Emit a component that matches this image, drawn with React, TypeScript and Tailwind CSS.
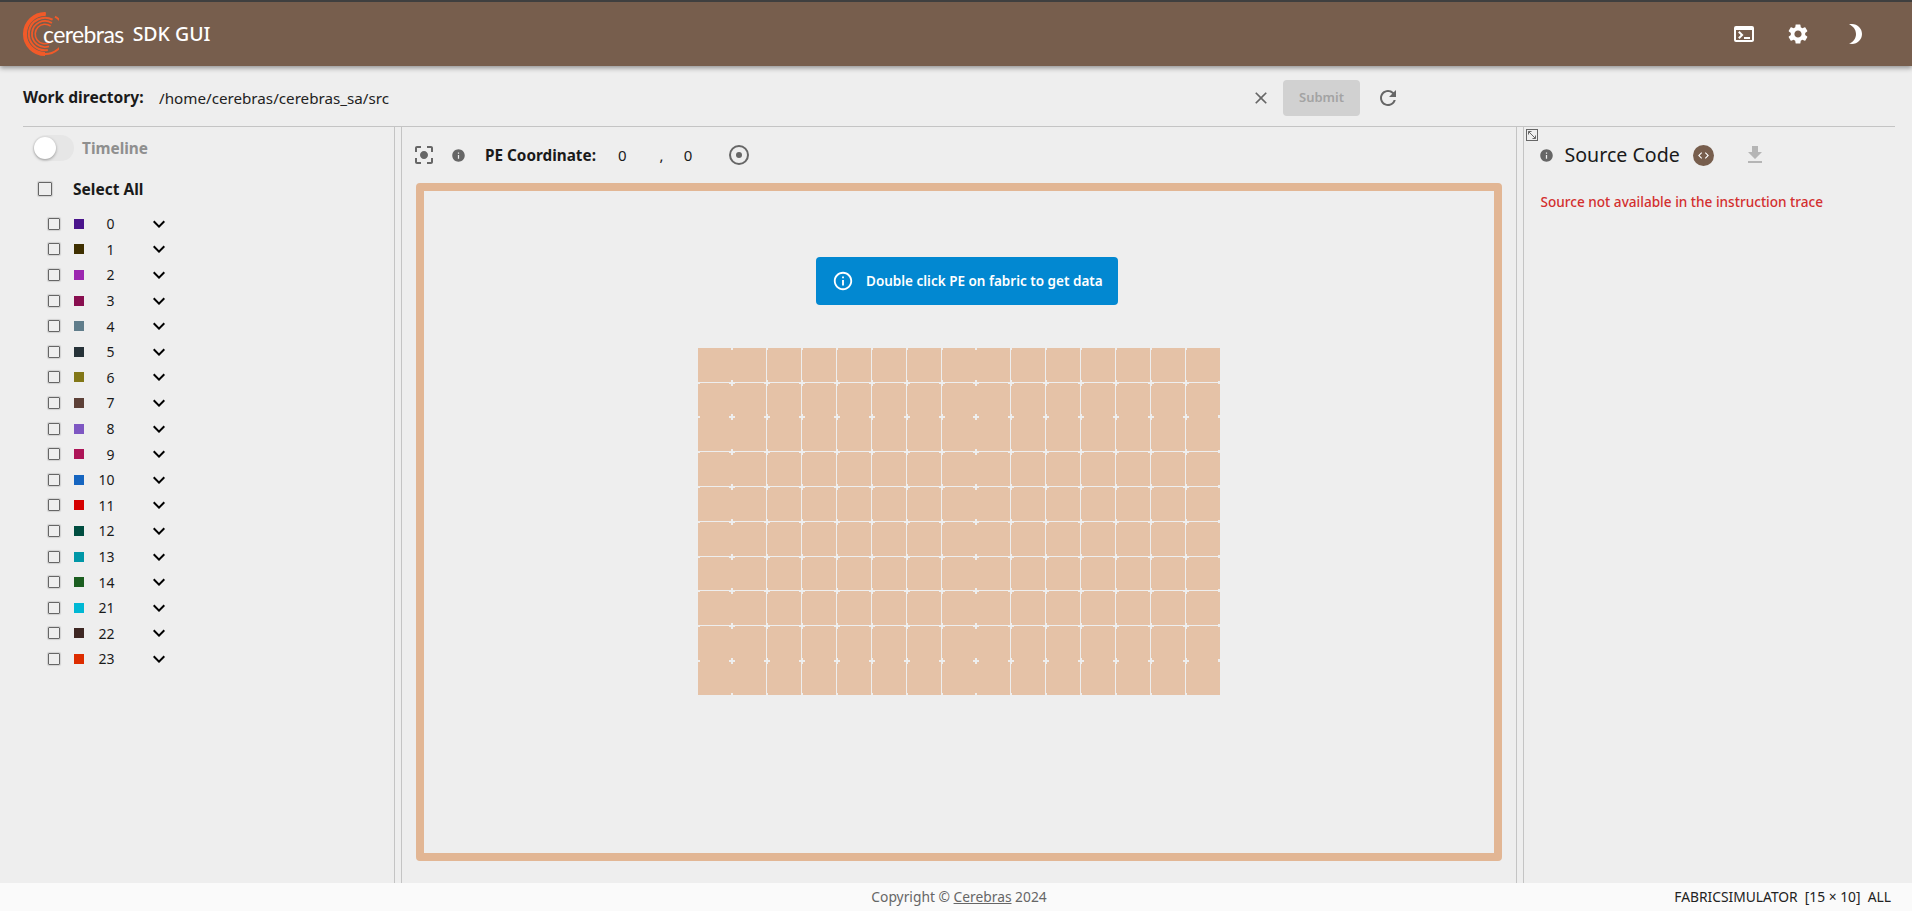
import React from "react";
import {
  MdTerminal,
  MdSettings,
  MdBrightness3,
  MdClose,
  MdRefresh,
  MdInfo,
  MdCenterFocusStrong,
  MdExpandMore,
  MdFileDownload,
  MdCode,
  MdInfoOutline,
} from "react-icons/md";

const rows: [string, string][] = [
  ["0", "#4a148c"],
  ["1", "#3e2f00"],
  ["2", "#9c27b0"],
  ["3", "#880e4f"],
  ["4", "#607d8b"],
  ["5", "#263238"],
  ["6", "#827717"],
  ["7", "#5d4037"],
  ["8", "#7e57c2"],
  ["9", "#ad1457"],
  ["10", "#1565c0"],
  ["11", "#d50000"],
  ["12", "#004d40"],
  ["13", "#0097a7"],
  ["14", "#1b5e20"],
  ["21", "#00b8d4"],
  ["22", "#3e2723"],
  ["23", "#dd2c00"],
];

function Logo() {
  const arc = (r: number, a0: number, a1: number) => {
    const cx = 22;
    const cy = 22;
    const p = (a: number) => [cx + r * Math.cos((a * Math.PI) / 180), cy + r * Math.sin((a * Math.PI) / 180)];
    const [x0, y0] = p(a0);
    const [x1, y1] = p(a1);
    return `M${x0} ${y0} A${r} ${r} 0 1 0 ${x1} ${y1}`;
  };
  return (
    <svg width="36" height="44" viewBox="0 0 36 44" fill="none" stroke="#f15a29" className="shrink-0">
      <path d={arc(20, -88, 90)} strokeWidth="4" />
      <path d={arc(20, -88, -60)} strokeWidth="2" />
      <path d={arc(16.2, -62, 80)} strokeWidth="2" />
      <path d={arc(13, -58, 72)} strokeWidth="1.8" />
      <path d={arc(9.8, -55, 62)} strokeWidth="1.6" />
    </svg>
  );
}

function Fabric() {
  const xs = [33, 68, 103, 138, 173, 208, 243, 277, 312, 347, 382, 417, 452, 487];
  const noV = new Set([33, 277]);
  const ys = [34, 68, 103, 138, 173, 208, 242, 277, 312];
  const noH = new Set([68, 312]);
  const c = "#eeeeee";
  return (
    <svg width="522" height="347" viewBox="0 0 522 347" className="block shrink-0">
      <rect width="522" height="347" fill="#e5c2a7" />
      {xs.filter((x) => !noV.has(x)).map((x) => (
        <rect key={"v" + x} x={x} y="0" width="1" height="347" fill={c} />
      ))}
      {ys.filter((y) => !noH.has(y)).map((y) => (
        <rect key={"h" + y} x="0" y={y} width="522" height="1" fill={c} />
      ))}
      {xs.map((x) =>
        ys.map((y) => (
          <g key={x + "-" + y} fill={c}>
            <rect x={x - 2} y={y} width="6" height="2" />
            <rect x={x} y={y - 2} width="2" height="6" />
          </g>
        ))
      )}
      {xs.map((x) => (
        <g key={"e" + x} fill={c}>
          <rect x={x} y="0" width="2" height="2" />
          <rect x={x} y="345" width="2" height="2" />
        </g>
      ))}
      {ys.map((y) => (
        <g key={"s" + y} fill={c}>
          <rect x="0" y={y} width="2" height="2" />
          <rect x="520" y={y - 1} width="2" height="3" />
        </g>
      ))}
    </svg>
  );
}

function Target() {
  return (
    <svg width="24" height="24" viewBox="0 0 24 24" fill="none" className="ml-[35px] text-[#666]">
      <circle cx="12" cy="12" r="9" stroke="currentColor" strokeWidth="2" />
      <circle cx="12" cy="12" r="3" fill="currentColor" />
    </svg>
  );
}

export default function App() {
  return (
    <div className="flex h-[911px] w-[1912px] flex-col overflow-hidden bg-[#eeeeee] font-['Noto_Sans','Open_Sans',sans-serif] text-[#1a1a1a]">
      <header className="relative z-10 flex h-[66px] shrink-0 items-center border-t-2 border-[#3f3f3f] bg-[#775e4d] pl-[23px] pr-[45px] shadow-[0_2px_5px_rgba(0,0,0,0.4)]">
        <Logo />
        <span className="-ml-[16px] font-['Lato',sans-serif] text-[23px] leading-none tracking-[-0.6px] text-white">cerebras</span>
        <span className="ml-[9px] text-[19.5px] font-medium leading-none text-white">SDK GUI</span>
        <div className="ml-auto flex items-center text-white">
          <MdTerminal size={24} />
          <MdSettings size={24} className="ml-[30px]" />
          <MdBrightness3 size={24} className="ml-[33px]" />
        </div>
      </header>

      <div className="flex h-[60px] shrink-0 items-center pl-[23px] pr-[512px] pt-[4px]">
        <span className="w-[136px] shrink-0 text-[15.6px] font-bold">Work directory:</span>
        <span className="flex-1 text-[15.2px] text-[#222]">/home/cerebras/cerebras_sa/src</span>
        <MdClose size={20} className="text-[#666]" />
        <button className="ml-[12px] h-[36px] w-[77px] rounded-[4px] bg-[#d1d1d1] text-[13px] font-semibold text-[#a3a3a3]">Submit</button>
        <MdRefresh size={24} className="ml-[16px] text-[#666]" />
      </div>

      <main className="ml-[23px] mr-[17px] flex min-h-0 flex-1 border-t border-[#c4c4c4]">
        <aside className="w-[372px] shrink-0 border-r border-[#c4c4c4]">
          <div className="ml-[10px] mt-[8px] flex h-[26px] items-center">
            <span className="relative h-[26px] w-[41px] rounded-full bg-[#e6e6e6]">
              <span className="absolute left-[1px] top-[2px] size-[22px] rounded-full bg-white shadow-[0_1px_3px_rgba(0,0,0,0.35)]" />
            </span>
            <span className="ml-[8px] pt-[2px] text-[15.4px] font-bold text-[#8f8f8f]">Timeline</span>
          </div>
          <div className="ml-[15px] mt-[18px] flex h-[20px] items-center">
            <span className="size-[14px] rounded-[1px] border-[1.5px] border-[#666] shadow-[0_0_1px_1px_rgba(0,0,0,0.12)]" />
            <span className="ml-[21px] pt-[2px] text-[15.5px] font-bold">Select All</span>
          </div>
          <div className="mt-[12px]">
            {rows.map(([n, color]) => (
              <div key={n} className="flex h-[25.6px] items-center pl-[25px]">
                <span className="size-[12px] rounded-[1px] border-[1.5px] border-[#666] shadow-[0_0_1px_1px_rgba(0,0,0,0.12)]" />
                <span className="ml-[14px] size-[10px]" style={{ backgroundColor: color }} />
                <span className="w-[30.5px] text-right text-[14px]">{n}</span>
                <MdExpandMore size={24} className="ml-[32.5px] text-black" />
              </div>
            ))}
          </div>
        </aside>

        <section className="ml-[6px] flex w-[1116px] shrink-0 flex-col border-x border-[#c4c4c4]">
          <div className="flex h-[56px] shrink-0 items-center pl-[10px]">
            <MdCenterFocusStrong size={24} className="text-[#666]" />
            <MdInfo size={15} className="ml-[14.5px] text-[#666]" />
            <span className="ml-[19.5px] w-[133px] text-[15.3px] font-bold">PE Coordinate:</span>
            <span className="text-[15px]">0</span>
            <span className="ml-[33px] text-[15px]">,</span>
            <span className="ml-[20px] text-[15px]">0</span>
            <Target />
          </div>
          <div className="mb-[22px] ml-[14px] mr-[14px] flex min-h-0 flex-1 flex-col items-center rounded-[4px] border-8 border-[#e2b694] pt-[66px]">
            <div className="ml-[16px] flex h-[48px] w-[302px] shrink-0 items-center rounded-[4px] bg-[#0288d1] pl-[16px] text-white">
              <MdInfoOutline size={22} />
              <span className="ml-[12px] text-[13.5px] font-semibold">Double click PE on fabric to get data</span>
            </div>
            <div className="mt-[43px]">
              <Fabric />
            </div>
          </div>
        </section>

        <section className="ml-[6px] min-w-0 flex-1 border-l border-[#c4c4c4]">
          <svg width="12" height="12" viewBox="0 0 12 12" fill="none" stroke="#666" className="ml-[2px] mt-[2px] block">
            <rect x="0.5" y="0.5" width="11" height="11" />
            <path d="M2.5 2.5 L9.5 9.5 M2.5 2.5 h3 M2.5 2.5 v3 M9.5 9.5 h-3 M9.5 9.5 v-3" />
          </svg>
          <div className="flex h-[28px] items-center pl-[14.5px]">
            <MdInfo size={15} className="text-[#666]" />
            <span className="ml-[11px] text-[19.6px] leading-none">Source Code</span>
            <span className="ml-[13px] flex size-[21px] items-center justify-center rounded-full bg-[#775e4d] text-white">
              <MdCode size={13} />
            </span>
            <MdFileDownload size={24} className="ml-[29px] text-[#b5b5b5]" />
          </div>
          <div className="ml-[16.5px] mt-[23px] text-[13.6px] font-medium leading-[20px] text-[#d32f2f]">Source not available in the instruction trace</div>
        </section>
      </main>

      <footer className="grid h-[28px] shrink-0 grid-cols-[1fr_auto_1fr] items-center bg-[#fafafa] pl-[27px] pr-[21px] text-[13.8px]">
        <span />
        <span className="text-[#666]">
          Copyright © <span className="underline">Cerebras</span> 2024
        </span>
        <span className="justify-self-end whitespace-pre text-[#222]">FABRICSIMULATOR  [15 × 10]  ALL</span>
      </footer>
    </div>
  );
}
